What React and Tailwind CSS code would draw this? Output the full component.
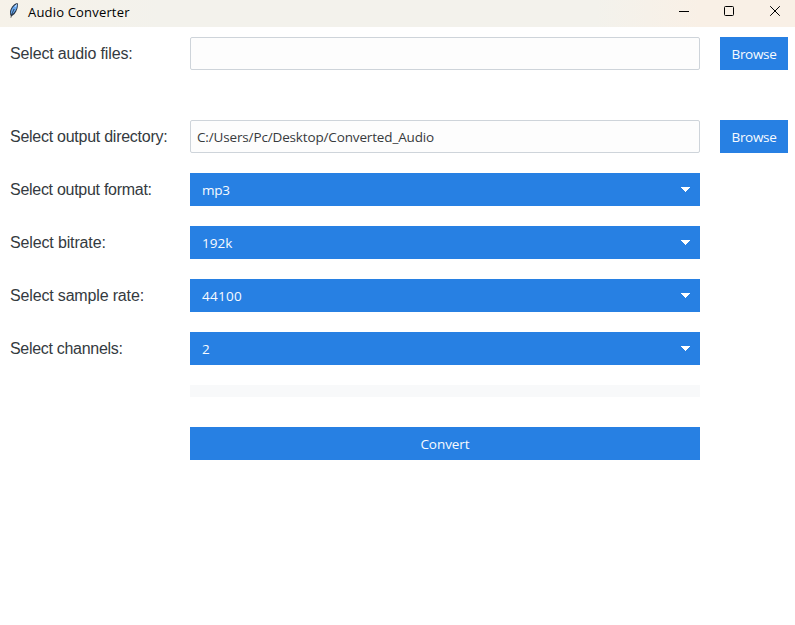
function Label({ children, className = "" }) {
  return (
    <label className={`w-[190px] shrink-0 whitespace-nowrap pl-[10px] font-["Liberation_Sans",Arial,sans-serif] text-[16px] leading-[33px] text-[#343a40] ${className}`}>
      {children}
    </label>
  );
}

function Button({ children, className = "" }) {
  return (
    <button className={`h-[33px] bg-[#2780e3] pt-px text-center text-[13.5px] leading-[32px] text-[#f8fbff] ${className}`}>
      {children}
    </button>
  );
}

function PathRow({ label, tracking, value }) {
  return (
    <div className="flex h-[33px]">
      <Label className={tracking}>{label}</Label>
      <div className="h-[33px] w-[510px] rounded-[2px] border border-[#ced4da] bg-[#fdfdfd] pl-[6px] text-[13.5px] leading-[32px] tracking-[-0.15px] text-[#373a3c]">
        {value}
      </div>
      <Button className="ml-5 w-[68px] tracking-[-0.3px]">Browse</Button>
    </div>
  );
}

function SelectRow({ label, tracking, value, valueTracking = "tracking-normal" }) {
  return (
    <div className="flex h-[33px]">
      <Label className={tracking}>{label}</Label>
      <div className="flex h-[33px] w-[510px] items-center justify-between bg-[#2780e3] pl-3 pr-[10px]">
        <span className={`pt-px leading-[32px] text-[#f8fbff] ${valueTracking}`}>{value}</span>
        <svg className="text-white" width="9" height="5" viewBox="0 0 9 5" fill="currentColor" shapeRendering="crispEdges">
          <path d="M0 0h9v1h-1v1h-1v1h-1v1h-1v1h-1v-1h-1v-1h-1v-1h-1v-1h-1z" />
        </svg>
      </div>
    </div>
  );
}

function Feather() {
  return (
    <svg className="ml-[9px] mt-[3px] shrink-0" width="10" height="16" viewBox="0 0 10 16" fill="none">
      <path d="M7.4 0.2C4.2 1.4 1.6 5 1 8.5L1.3 12.4L3.4 12.8C6.6 10.5 8.4 7 9 2.4L8.8 0.2Z" fill="#253345" />
      <path d="M7.9 1C4.8 2.5 2.4 5.5 1.9 9L2.4 11.9C5.9 9.5 7.6 6.5 8.3 2.6Z" fill="#69a9f0" />
      <path d="M5.2 6C4 8.3 2.9 10.5 1.9 14.6" stroke="#17202b" strokeWidth="0.8" />
      <path d="M7.6 1.5L5.9 4" stroke="#d3e6fa" strokeWidth="1" />
    </svg>
  );
}

function TitleBar() {
  return (
    <header className="flex h-[27px] items-start justify-between bg-[linear-gradient(90deg,#f6f2e9_0%,#f3f2ec_20%,#f3f2ec_75%,#f9f0e6_88%,#f9f0e6_100%)] text-black">
      <div className="flex">
        <Feather />
        <span className="ml-[9px] text-[13px] leading-[25px] tracking-[0.18px]">Audio Converter</span>
      </div>
      <svg width="116" height="24" viewBox="0 0 116 24" fill="none" stroke="currentColor">
        <path d="M0 11.5h10" shapeRendering="crispEdges" />
        <rect x="45.5" y="6.5" width="9" height="9" rx="1" />
        <path d="M91.2 6.2l9.6 9.6M100.8 6.2l-9.6 9.6" />
      </svg>
    </header>
  );
}

export default function App() {
  return (
    <div className='h-[625px] w-[795px] overflow-hidden bg-white font-["Open_Sans","Noto_Sans",sans-serif] text-[13.5px]'>
      <TitleBar />
      <main className="pt-[10px]">
        <PathRow label="Select audio files:" tracking="tracking-[-0.15px]" value="" />
        <div className="mt-[50px] flex flex-col gap-5">
          <PathRow label="Select output directory:" tracking="tracking-[-0.26px]" value="C:/Users/Pc/Desktop/Converted_Audio" />
          <SelectRow label="Select output format:" tracking="tracking-[-0.28px]" value="mp3" valueTracking="tracking-[-0.3px]" />
          <SelectRow label="Select bitrate:" tracking="tracking-[-0.14px]" value="192k" />
          <SelectRow label="Select sample rate:" tracking="tracking-[-0.16px]" value="44100" valueTracking="tracking-[0.3px]" />
          <SelectRow label="Select channels:" tracking="tracking-[-0.3px]" value="2" />
        </div>
        <div className="ml-[190px] mt-5 h-3 w-[510px] bg-[#f8f9fa]" />
        <Button className="ml-[190px] mt-[30px] block w-[510px] tracking-[-0.05px]">Convert</Button>
      </main>
    </div>
  );
}
